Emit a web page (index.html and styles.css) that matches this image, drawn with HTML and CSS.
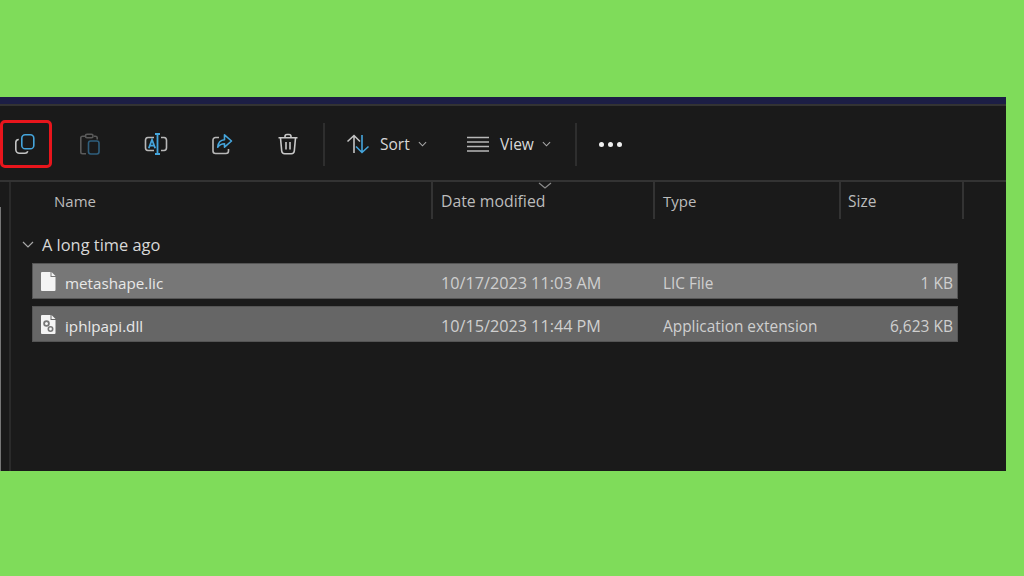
FILE: index.html
```html
<!DOCTYPE html>
<html lang="en">
<head>
<meta charset="utf-8">
<title>File Explorer</title>
<link rel="stylesheet" href="styles.css">
</head>
<body>
<main class="window">
  <div class="titlebar"></div>
  <div class="toolbar">
    <div class="tool tool-first">
      <svg class="icon" viewBox="0 0 22 22" fill="none" stroke-width="1.6"><path d="M4.800 6.500A3 3 0 0 0 1.800 9.500v7A3.700 3.700 0 0 0 5.500 20.200h5.500a3 3 0 0 0 2.800-2" stroke="#c4c4c4"/><rect x="7.800" y="1.800" width="12" height="14" rx="3.400" stroke="#45a5dc"/></svg>
    </div>
    <div class="tool">
      <svg class="icon" viewBox="0 0 22 22" fill="none" stroke-width="1.6"><path d="M7 3.200H3.500A1.700 1.700 0 0 0 1.800 5v14a1.700 1.700 0 0 0 1.700 1.700H7M15 3.200h1.500a1.700 1.700 0 0 1 1.700 1.800v1.500" stroke="#5a5a5a"/><rect x="6.500" y="1.200" width="7.500" height="3.600" rx="1.500" stroke="#5a5a5a"/><rect x="9.500" y="8" width="10.500" height="13" rx="2.200" stroke="#2f5f7d"/></svg>
    </div>
    <div class="tool">
      <svg class="icon icon-wide" viewBox="0 0 24 22" fill="none" stroke-width="1.6"><path d="M10 4.500H4a2.800 2.800 0 0 0-2.500 2.800v7.400A2.800 2.800 0 0 0 4 17.500h6M17 4.500h3a2.800 2.800 0 0 1 2.500 2.800v7.400a2.800 2.800 0 0 1-2.500 2.800h-3" stroke="#b8b8b8"/><path d="M11 1h5M13.500 1v20M11 21h5M4.800 15.200l3.200-8.400 3.200 8.400M6 12.700h4" stroke="#45a5dc" stroke-width="1.800"/></svg>
    </div>
    <div class="tool">
      <svg class="icon" viewBox="0 0 22 22" fill="none" stroke-width="1.6"><path d="M8 4.500H4.500A2.500 2.500 0 0 0 2 7v11a2.500 2.500 0 0 0 2.500 2.500h10.500a2.500 2.500 0 0 0 2.500-2.500v-2" stroke="#b8b8b8"/><path d="M13.500 1.800 20.500 8l-7 6.200v-3.500c-3 0-5 1-6.800 3.500.4-4.500 3-7.300 6.800-7.500z" stroke="#45a5dc" stroke-linejoin="round"/></svg>
    </div>
    <div class="tool">
      <svg class="icon" viewBox="0 0 22 22" fill="none" stroke-width="1.6" stroke="#c8c8c8"><path d="M1.500 4.700h19M8 4.500V3.500a2 2 0 0 1 2-2h2a2 2 0 0 1 2 2v1M3.500 5l1.200 13a3 3 0 0 0 3 2.700h6.600a3 3 0 0 0 3-2.700l1.200-13M9 9v7.500M13 9v7.500"/></svg>
    </div>
    <div class="tool-sep tool-sep-first"></div>
    <div class="menu menu-sort">
      <svg class="menu-icon" viewBox="0 0 24 20" fill="none" stroke-width="1.6"><path d="M8 19V1.500M1.500 7.500 8 1.500l6 6" stroke="#c4c4c4"/><path d="M16 1v17.500M10 12.500l6 6 6.500-6" stroke="#45a5dc"/></svg>
      <span class="menu-label">Sort</span>
      <svg class="chev" viewBox="0 0 10 6" fill="none" stroke="#a8a8a8" stroke-width="1.2"><path d="M1 1l4 4 4-4"/></svg>
    </div>
    <div class="menu menu-view">
      <svg class="menu-icon" viewBox="0 0 24 20" fill="none" stroke="#b8b8b8" stroke-width="1.6"><path d="M1 3.500h22M1 8h22M1 12.500h22M1 17h22"/></svg>
      <span class="menu-label">View</span>
      <svg class="chev" viewBox="0 0 10 6" fill="none" stroke="#a8a8a8" stroke-width="1.2"><path d="M1 1l4 4 4-4"/></svg>
    </div>
    <div class="tool-sep"></div>
    <div class="more"><i></i><i></i><i></i></div>
  </div>
  <div class="content">
    <div class="pane-rail"></div>
    <div class="files">
      <div class="columns">
        <div class="col col-name">Name</div>
        <div class="col col-date">Date modified
          <svg class="sort-caret" viewBox="0 0 14 7" fill="none" stroke="#8a8a8a" stroke-width="1.2"><path d="M1 1l6 5 6-5"/></svg>
        </div>
        <div class="col col-type">Type</div>
        <div class="col col-size">Size</div>
      </div>
      <div class="group">
        <svg class="group-chev" viewBox="0 0 12 7" fill="none" stroke="#a8a8a8" stroke-width="1.2"><path d="M1 1l5 5 5-5"/></svg>
        <span>A long time ago</span>
      </div>
      <div class="row row-first">
        <div class="cell-name">
          <svg class="file-icon" viewBox="0 0 15 19"><path d="M1 0h8.500v5h5v13a1 1 0 0 1-1 1H1a1 1 0 0 1-1-1V1a1 1 0 0 1 1-1z" fill="#f4f4f4"/><path d="M10.500 0l4 4h-4z" fill="#f4f4f4"/></svg>
          metashape.lic
        </div>
        <div class="cell-date">10/17/2023 11:03 AM</div>
        <div class="cell-type">LIC File</div>
        <div class="cell-size">1 KB</div>
      </div>
      <div class="row row-second">
        <div class="cell-name">
          <svg class="file-icon" viewBox="0 0 15 19"><path d="M1 0h8.500v5h5v13a1 1 0 0 1-1 1H1a1 1 0 0 1-1-1V1a1 1 0 0 1 1-1z" fill="#f4f4f4"/><path d="M10.500 0l4 4h-4z" fill="#f4f4f4"/><circle cx="5.500" cy="8.500" r="2.400" fill="none" stroke="#777" stroke-width="1.800"/><circle cx="9.500" cy="14" r="2.200" fill="none" stroke="#777" stroke-width="1.600"/></svg>
          iphlpapi.dll
        </div>
        <div class="cell-date">10/15/2023 11:44 PM</div>
        <div class="cell-type">Application extension</div>
        <div class="cell-size">6,623 KB</div>
      </div>
    </div>
  </div>
  <div class="highlight"></div>
</main>
</body>
</html>
```
FILE: styles.css
```css
* { box-sizing: border-box; }
html, body { margin: 0; height: 100%; }
body {
  background: #7fdc5a;
  padding-top: 97px;
  font-family: "Open Sans", "Noto Sans", sans-serif;
  overflow: hidden;
}
.window {
  position: relative;
  width: 1006px;
  height: 374px;
  background: #1a1a1a;
  display: flex;
  flex-direction: column;
}
.titlebar {
  height: 9px;
  flex: none;
  background: #1c1e45;
  border-bottom: 2px solid #333;
}
.toolbar {
  height: 76px;
  flex: none;
  display: flex;
  align-items: center;
  padding-top: 2px;
  border-bottom: 2px solid #333;
}
.tool {
  width: 66px;
  height: 40px;
  display: flex;
  align-items: center;
  justify-content: center;
}
.tool-first { width: 57px; padding-right: 7px; }
.icon { width: 22px; height: 22px; display: block; }
.icon-wide { width: 24px; }
.tool-sep {
  width: 2px;
  height: 43px;
  background: #2e2e2e;
  flex: none;
}
.tool-sep-first { margin-left: 2px; margin-right: 21px; }
.menu {
  display: flex;
  align-items: center;
  color: #d8d8d8;
  font-size: 15.5px;
}
.menu-icon { width: 24px; height: 20px; flex: none; }
.menu-sort { width: 120px; }
.menu-view { width: 109px; }
.menu-label { margin-left: 10px; }
.chev { width: 9px; height: 6px; margin-left: 8px; }
.more { display: flex; gap: 4px; margin-left: 22px; }
.more i { width: 5px; height: 5px; border-radius: 50%; background: #f0f0f0; display: block; }
.content { flex: 1; display: flex; min-height: 0; }
.pane-rail {
  width: 11px;
  flex: none;
  border-right: 2px solid #2a2a2a;
  background: #1a1a1a;
}
.pane-rail::before {
  content: "";
  display: block;
  width: 1px;
  height: 264px;
  margin-top: 25px;
  background: #777;
}
.files { flex: 1; min-width: 0; }
.columns {
  display: flex;
  height: 37px;
  align-items: center;
  color: #bcbcbc;
  font-size: 15px;
}
.col { height: 100%; display: flex; align-items: center; position: relative; }
.col-name { width: 420px; padding-left: 43px; }
.col-date { width: 222px; padding-left: 8px; border-left: 2px solid #333; font-size: 15.8px; }
.col-type { width: 186px; padding-left: 8px; border-left: 2px solid #333; }
.col-size { width: 125px; padding-left: 7px; border-left: 2px solid #333; border-right: 2px solid #333; font-size: 15.5px; }
.sort-caret { position: absolute; left: 105px; top: 0; width: 14px; height: 7px; }
.group {
  display: flex;
  align-items: center;
  height: 24px;
  margin-top: 13px;
  color: #d8d8d8;
  font-size: 16.4px;
}
.group-chev { width: 12px; height: 7px; margin-left: 11px; margin-right: 8px; }
.row {
  display: flex;
  align-items: center;
  width: 926px;
  height: 36px;
  margin-left: 21px;
  padding-top: 4px;
  color: #cfcfcf;
  font-size: 15.4px;
  border: 1px solid #555;
}
.row-first { margin-top: 7px; background: #777; }
.row-second { margin-top: 7px; background: #666; }
.row > div { white-space: nowrap; }
.cell-name { width: 408px; display: flex; align-items: center; padding-left: 8px; color: #e8e8e8; font-size: 15.2px; }
.file-icon { width: 15px; height: 19px; margin-right: 9px; margin-top: -3px; flex: none; }
.cell-date { width: 222px; font-size: 16.2px; }
.cell-type { width: 185px; }
.cell-size { width: 105px; text-align: right; font-size: 15.5px; }
.highlight {
  position: absolute;
  left: 0;
  top: 23px;
  width: 52px;
  height: 48px;
  border: 3px solid #e8151c;
  border-radius: 5px;
}
```
